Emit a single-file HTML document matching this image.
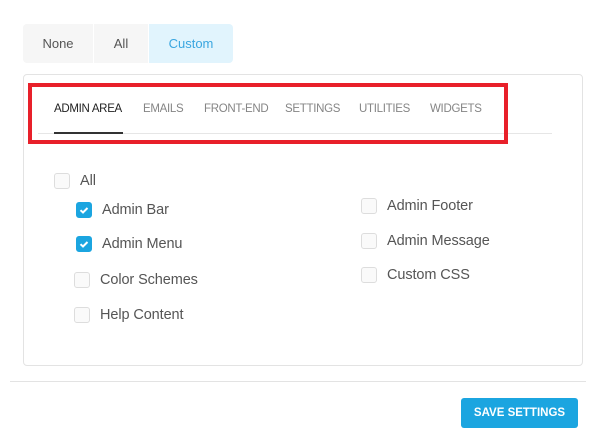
<!DOCTYPE html>
<html><head><style>
body{margin:0;width:600px;height:440px;background:#fff;font-family:"Liberation Sans",Arial,sans-serif;position:relative;overflow:hidden}
.a{position:absolute}
.seg{top:24px;height:39px;line-height:39px;font-size:13px;color:#555;text-align:center;background:#f6f6f6}
.tab{top:103px;font-size:11.5px;color:#858585;letter-spacing:-0.3px}
.cb{width:14px;height:14px;border:1px solid #ddd;border-radius:3px;background:#fafafa}
.cb.on{background:#1ba5e0;border-color:#1ba5e0}
.lb{font-size:14.5px;color:#555;letter-spacing:-0.1px}
</style></head><body>
<div class="a seg" style="left:23px;width:70px;border-radius:4px 0 0 4px">None</div>
<div class="a seg" style="left:94px;width:54px">All</div>
<div class="a seg" style="left:149px;width:84px;background:#e1f4fd;color:#3aa6e0;border-radius:0 4px 4px 0">Custom</div>
<div class="a" style="left:23px;top:74px;width:558px;height:290px;border:1px solid #e3e3e3;border-radius:4px"></div>
<div class="a" style="left:38px;top:133px;width:514px;height:1px;background:#e6e6e6"></div>
<div class="a tab" style="left:54px;color:#222">ADMIN AREA</div>
<div class="a" style="left:54px;top:132px;width:69px;height:2px;background:#333"></div>
<div class="a tab" style="left:143px">EMAILS</div>
<div class="a tab" style="left:204px">FRONT-END</div>
<div class="a tab" style="left:285px">SETTINGS</div>
<div class="a tab" style="left:359px">UTILITIES</div>
<div class="a tab" style="left:430px">WIDGETS</div>
<div class="a" style="left:28px;top:83px;width:472px;height:53px;border:4px solid #e8202a"></div>

<div class="a cb" style="left:54px;top:173px"></div><div class="a lb" style="left:80px;top:173px">All</div>
<div class="a cb on" style="left:76px;top:202px"><svg width="14" height="14"><path d="M3.5 7.2l2.5 2.3 4.5-4.5" stroke="#fff" stroke-width="2" fill="none"/></svg></div><div class="a lb" style="left:102px;top:202px">Admin Bar</div>
<div class="a cb on" style="left:76px;top:236px"><svg width="14" height="14"><path d="M3.5 7.2l2.5 2.3 4.5-4.5" stroke="#fff" stroke-width="2" fill="none"/></svg></div><div class="a lb" style="left:102px;top:236px">Admin Menu</div>
<div class="a cb" style="left:74px;top:272px"></div><div class="a lb" style="left:100px;top:272px">Color Schemes</div>
<div class="a cb" style="left:74px;top:307px"></div><div class="a lb" style="left:100px;top:307px">Help Content</div>
<div class="a cb" style="left:361px;top:198px"></div><div class="a lb" style="left:387px;top:198px">Admin Footer</div>
<div class="a cb" style="left:361px;top:233px"></div><div class="a lb" style="left:387px;top:233px">Admin Message</div>
<div class="a cb" style="left:361px;top:267px"></div><div class="a lb" style="left:387px;top:267px">Custom CSS</div>

<div class="a" style="left:10px;top:381px;width:576px;height:1px;background:#e3e3e3"></div>
<div class="a" style="left:461px;top:398px;width:117px;height:30px;background:#1ba5e0;border-radius:3px;color:#fff;font-size:11.5px;font-weight:bold;text-align:center;line-height:30px">SAVE SETTINGS</div>
</body></html>
